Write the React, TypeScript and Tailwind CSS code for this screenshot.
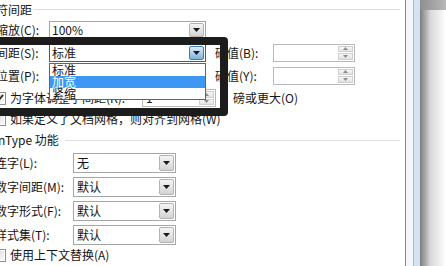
import clsx from 'clsx';

function DownArrow() {
  return (
    <svg width="7" height="4" viewBox="0 0 7 4">
      <path d="M0 0h7L3.5 4z" fill="#1a1a1a" />
    </svg>
  );
}

function Select({
  value,
  className,
  btnClass,
  focused,
}: {
  value: string;
  className: string;
  btnClass: string;
  focused?: boolean;
}) {
  return (
    <div
      className={clsx(
        'flex items-center bg-white border shrink-0',
        focused ? 'border-[#4d5b69]' : 'border-[#a6a6a6]',
        className
      )}
    >
      <span className="flex-1 pl-[2px] whitespace-nowrap leading-[14px]">{value}</span>
      <div
        className={clsx(
          'flex items-center justify-center w-[15px] mr-px border rounded-[2px]',
          focused
            ? 'border-[#3c7fb1] bg-gradient-to-b from-[#dcedf9] to-[#7ab3dc]'
            : 'border-[#b3b3b3] bg-gradient-to-b from-[#f5f5f5] to-[#d3d3d3]',
          btnClass
        )}
      >
        <DownArrow />
      </div>
    </div>
  );
}

function Spin({ value, className }: { value?: string; className: string }) {
  return (
    <div className={clsx('flex items-stretch bg-white border border-[#b9b9b9] shrink-0', className)}>
      <span className="flex-1 pl-[3px] leading-[14px] self-center">{value}</span>
      <div className="flex flex-col w-[15px] my-px mr-px gap-px">
        <div className="flex-1 flex items-center justify-center border border-[#cfcfcf] bg-gradient-to-b from-[#f7f7f7] to-[#e2e2e2]">
          <svg width="5" height="3" viewBox="0 0 5 3">
            <path d="M0 3h5L2.5 0z" fill="#8a8a8a" />
          </svg>
        </div>
        <div className="flex-1 flex items-center justify-center border border-[#cfcfcf] bg-gradient-to-b from-[#f7f7f7] to-[#e2e2e2]">
          <svg width="5" height="3" viewBox="0 0 5 3">
            <path d="M0 0h5L2.5 3z" fill="#8a8a8a" />
          </svg>
        </div>
      </div>
    </div>
  );
}

function Check({ checked }: { checked?: boolean }) {
  return (
    <div className="ml-[-7px] w-[13px] h-[13px] shrink-0 border border-[#8f8f8f] bg-white p-px">
      <div className="w-full h-full bg-gradient-to-br from-[#dcdcdc] to-[#f8f8f8] flex items-center justify-center">
        {checked && (
          <svg width="9" height="8" viewBox="0 0 9 8">
            <path d="M1 4l2.5 2.5L8 1" stroke="#2a2a2a" strokeWidth="1.8" fill="none" />
          </svg>
        )}
      </div>
    </div>
  );
}

export default function App() {
  return (
    <div className="flex w-[446px] h-[266px] overflow-hidden bg-white font-['Noto_Sans_CJK_SC',sans-serif] text-[12px] text-[#141414]">
      <div className="relative w-[405px] h-full overflow-hidden">
        {/* 字符间距 */}
        <div className="flex items-center h-[19px]">
          <span className="ml-[-16px] whitespace-nowrap leading-[14px]">字符间距</span>
          <div className="flex-1 h-px bg-[#dedede] ml-[2px] mr-[5px]" />
        </div>
        <div className="flex items-center h-[22px]">
          <span className="ml-[-4px] w-[53px] shrink-0 whitespace-nowrap">缩放(C):</span>
          <Select value="100%" className="w-[157px] h-[18px]" btnClass="h-[14px]" />
        </div>
        <div className="flex items-center h-[23px]">
          <span className="ml-[-4px] w-[53px] shrink-0 whitespace-nowrap">间距(S):</span>
          <Select value="标准" focused className="w-[157px] h-[18px]" btnClass="h-[14px]" />
          <span className="ml-[9px] w-[58px] shrink-0 whitespace-nowrap">磅值(B):</span>
          <Spin className="w-[82px] h-[18px]" />
        </div>
        <div className="flex items-center h-[23px]">
          <span className="ml-[-4px] w-[53px] shrink-0 whitespace-nowrap">位置(P):</span>
          <Select value="标准" className="w-[157px] h-[18px]" btnClass="h-[14px]" />
          <span className="ml-[9px] w-[58px] shrink-0 whitespace-nowrap">磅值(Y):</span>
          <Spin className="w-[82px] h-[18px]" />
        </div>
        <div className="flex items-center h-[22px]">
          <Check checked />
          <span className="ml-[4px] w-[132px] shrink-0 whitespace-nowrap">为字体调整字间距(K):</span>
          <Spin value="1" className="w-[74px] h-[18px]" />
          <span className="ml-[17px] whitespace-nowrap">磅或更大(O)</span>
        </div>
        <div className="flex items-center h-[20px]">
          <Check />
          <span className="ml-[4px] whitespace-nowrap">如果定义了文档网格，则对齐到网格(W)</span>
        </div>

        {/* OpenType 功能 */}
        <div className="flex items-center h-[22px]">
          <span className="ml-[-25px] w-[90px] shrink-0 whitespace-nowrap">OpenType 功能</span>
          <div className="flex-1 h-px bg-[#dedede] mr-[5px]" />
        </div>
        {[
          ['连字(L):', '无'],
          ['数字间距(M):', '默认'],
          ['数字形式(F):', '默认'],
          ['样式集(T):', '默认'],
        ].map(([label, value]) => (
          <div key={label} className="flex items-center h-[24px]">
            <span className="ml-[-5px] w-[78px] shrink-0 whitespace-nowrap">{label}</span>
            <Select value={value} className="w-[103px] h-[20px] [&>span]:pl-[3px]" btnClass="h-[16px]" />
          </div>
        ))}
        <div className="flex items-center h-[16px]">
          <Check />
          <span className="ml-[4px] whitespace-nowrap">使用上下文替换(A)</span>
        </div>

        {/* open drop-down list */}
        <div className="absolute left-[49px] top-[63px] w-[157px] h-[37px] border border-[#646464] bg-white">
          <div className="h-[12px] leading-[12px] pl-[2px]">标准</div>
          <div className="h-[12px] leading-[12px] pl-[2px] bg-[#3e97f2] text-white">加宽</div>
          <div className="h-[12px] leading-[12px] pl-[2px]">紧缩</div>
        </div>

        {/* hand-drawn highlight box */}
        <div className="absolute left-[-12px] top-[37px] w-[240px] h-[79px] border-[8px] border-[#1c1c1c] rounded-[4px]" />
      </div>

      {/* window frame */}
      <div className="w-px bg-[#8b8b8b]" />
      <div className="w-[7px] bg-[#f3f7fb]" />
      <div className="w-px bg-[#a7b9cc]" />
      <div className="w-[6px] bg-[#d3e3f3]" />
      <div className="flex-1 flex flex-col">
        <div className="h-[10px] bg-gradient-to-r from-[#8e8e8e] to-[#b8b8b8]" />
        <div className="flex-1 bg-gradient-to-r from-[#7d7d7d] via-[#d8d8d8] via-40% to-white" />
      </div>
    </div>
  );
}
